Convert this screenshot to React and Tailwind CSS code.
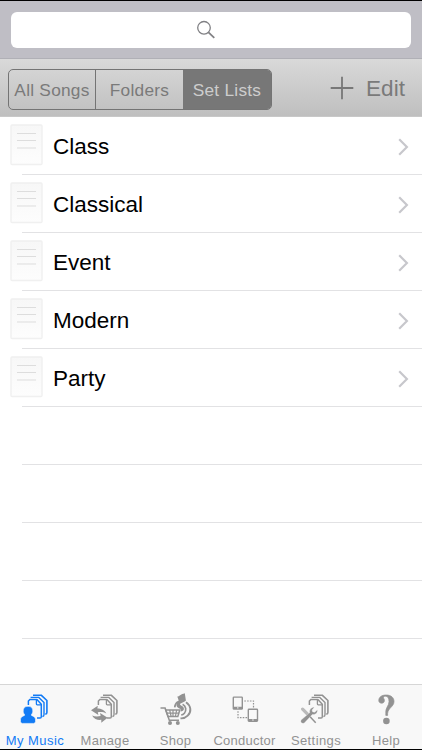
import React from 'react';

const lists = ['Class', 'Classical', 'Event', 'Modern', 'Party'];

function Pages() {
  return (
    <g fill="none" stroke="currentColor" strokeWidth="1.5">
      <path d="M11.4 15V11l1.5-1.5h7l4.4 4.8v12.4q0 1.3-1.3 1.3H20" />
      <path d="M19.4 9.8v4.2q0 .8.8.8h4" strokeWidth="1.3" />
      <path d="M13.6 7.4h8.2l5.2 5.2v12.2q0 1.5-1.6 1.7" strokeWidth="1.4" />
      <path d="M16 5.3h8.4l5.5 5.2v12q0 1.4-1.6 1.7" strokeWidth="1.6" />
    </g>
  );
}

function MusicIcon() {
  return (
    <svg className="h-9 w-9" viewBox="0 0 36 36">
      <Pages />
      <path fill="currentColor" stroke="#f8f8f8" strokeWidth=".6" d="M11 16.3c-3.3 0-5 2-4.8 4.9.1 1.8.9 2.8 1.6 3.7-.2 1.1-4.3 1.3-4.3 4.2v2.5q0 1.8 1.8 1.8h11.4q1.8 0 1.8-1.8v-2.5c0-2.9-4.1-3.1-4.3-4.2.7-.9 1.5-1.9 1.6-3.7.2-2.9-1.5-4.9-4.8-4.9z" />
    </svg>
  );
}

function ManageIcon() {
  return (
    <svg className="h-9 w-9" viewBox="0 0 36 36">
      <Pages />
      <path fill="currentColor" d="M4 20.3l6.8-4.6-.4 2.7c3.7.2 7.4 1.4 8.9 5-2.5-1.4-5.3-1.6-8.5-1.2l.6 2.9z" />
      <path fill="currentColor" d="M20.6 27.7l-6.3 5v-2.9c-3.7.4-7.3-.7-9.2-4.4 2.6 1.2 5.4 1.3 8.5.6l-.5-2.9z" />
    </svg>
  );
}

function ShopIcon() {
  return (
    <svg className="h-9 w-9" viewBox="0 0 36 36">
      <g fill="none" stroke="currentColor" strokeWidth="1.5">
        <path d="M2.5 18.1h4.6l4.2 12.1H21" />
        <path d="M7.7 20h14.1l-2 6.5H10z" />
        <path d="M8.7 23.2h12.4M11.7 20l1.4 6.5M15 20v6.5M18.6 20l-1.2 6.5" strokeWidth="1.2" />
        <path d="M16.7 17.4c.2-2.7 1.2-4.4 3.1-5.7" strokeWidth="1.6" />
        <path d="M28 12.2c5.1 3.5 5.8 9.5 1.7 13.4-2 2-4.6 3-7.2 2.7" strokeWidth="1.9" />
        <path d="M24.6 14.3c3.6 1.8 4 6.4 1.8 8.9-1 1.1-2 1.6-3.2 1.8" strokeWidth="1.7" />
      </g>
      <path fill="currentColor" d="M19.3 6.6c2.7-.5 3.5-2.5 7.5-3.4l1.1 7.2c-1.8 2.1-6.4 2.4-5.8 4.2.3 1.2 3.7 1.6 3.8 4.2.1 1.7-1.7 2.6-3.3 2.6l.3-2.2c-2-1.4-4.7-1.8-4.4-4.8.2-2.3 1.3-3.3 2.2-3.9z" />
      <circle cx="12" cy="33.1" r="2" fill="currentColor" />
      <circle cx="19.8" cy="33.1" r="2" fill="currentColor" />
    </svg>
  );
}

function ConductorIcon() {
  return (
    <svg className="h-9 w-9" viewBox="0.7 0 36 36">
      <g fill="none" stroke="currentColor">
        <rect x="7" y="7.1" width="9" height="12" rx=".7" strokeWidth="1.4" />
        <rect x="22" y="19.3" width="9.2" height="12" rx=".7" strokeWidth="1.4" />
        <path d="M6.7 17.8h9.6M21.7 30h9.8" strokeWidth="2.2" />
        <path d="M18 11h9.2v6.8M11.7 21.2v6.5h9.5" strokeWidth="1.2" strokeDasharray="1.6 1.2" />
      </g>
      <path d="M10.7 17.9h1.5M25.9 30h1.5" stroke="#f8f8f8" strokeWidth="1" />
    </svg>
  );
}

function SettingsIcon() {
  return (
    <svg className="h-9 w-9" viewBox="0 0 36 36">
      <Pages />
      <path d="M4.2 19.6l13.5 13" stroke="#f8f8f8" strokeWidth="4" />
      <path d="M4.6 19.1l5.2 5.3" stroke="currentColor" strokeWidth="3.2" strokeLinecap="round" opacity=".6" />
      <path d="M10 24.6l7.7 8.2" stroke="currentColor" strokeWidth="1.5" />
      <path fill="currentColor" stroke="#f8f8f8" strokeWidth=".3" d="M3.1 30.1l8.6-7.4c-.5-3.1 1.6-5.5 4.6-5.4l-2.3 2.8.7 1.9 2.1.2 2.5-2.5c.6 3.1-1.9 5.2-5 4.8l-8 8.4c-2.1 1.5-4.4-.9-3.2-2.8z" />
    </svg>
  );
}

function HelpIcon() {
  return (
    <svg className="h-9 w-9" viewBox="0 0 36 36">
      <path fill="currentColor" stroke="currentColor" strokeWidth=".7" d="M10.8 10.8c-.2-3.8 3.1-5.8 7.5-5.8 4.6 0 7.7 2.5 7.7 6.5 0 5.2-5.8 6.3-6.4 11.9v2h-1.8v-2c-.6-5.8 3.2-7.3 3.2-11.9 0-3.4-1.3-5.3-3.5-5.3-1.2 0-2.1.6-2.1 1.3 0 1 1 1.3 1 2.9 0 1.7-1.1 2.8-2.7 2.8-1.7 0-2.8-1-2.9-2.4z" />
      <circle cx="18.4" cy="31" r="3.3" fill="currentColor" />
    </svg>
  );
}

const tabs = [
  ['My Music', MusicIcon, 'w-[70px] tracking-[0.45px] text-[#127bf5]'],
  ['Manage', ManageIcon, 'w-[70px] tracking-[0.35px] text-[#929292]'],
  ['Shop', ShopIcon, 'w-[71px] tracking-[0.3px] text-[#929292]'],
  ['Conductor', ConductorIcon, 'w-[67px] tracking-[0.25px] text-[#929292]'],
  ['Settings', SettingsIcon, 'w-[76px] tracking-[0.4px] text-[#929292]'],
  ['Help', HelpIcon, 'w-[64px] tracking-[0.3px] text-[#929292]'],
];

function ListIcon() {
  return (
    <svg className="mb-px ml-2.5 h-[42px] w-[33px] shrink-0" viewBox="0 0 33 42">
      <defs>
        <linearGradient id="paper" x1="0" y1="0" x2="0" y2="1">
          <stop offset="0" stopColor="#f7f7f7" />
          <stop offset="1" stopColor="#fdfdfd" />
        </linearGradient>
      </defs>
      <rect x="1" y="1" width="31" height="39.5" rx="1" fill="url(#paper)" stroke="#f0f0f0" strokeWidth="1.4" />
      <path d="M7 9.5h19M7 16.5h19M7 24h19" stroke="#dddddd" strokeWidth="1" />
    </svg>
  );
}

function Row({ name }) {
  return (
    <div className="flex h-[58px] shrink-0 flex-col">
      <div className="flex flex-1 items-center">
        {name && (
          <>
            <ListIcon />
            <span className="ml-[10px] mt-[3px] flex-1 text-[22.5px] leading-7 text-black">{name}</span>
            <svg className="mr-[12px] mt-[2px] h-[18px] w-3" viewBox="0 0 12 18" fill="none" stroke="#c7c7cc" strokeWidth="2.2">
              <path d="M1.2 1.3L8.9 9l-7.7 7.7" />
            </svg>
          </>
        )}
      </div>
      <div className="ml-[22px] h-px bg-[#e2e2e4]" />
    </div>
  );
}

export default function App() {
  return (
    <div className="flex h-[750px] w-[422px] flex-col overflow-hidden bg-white font-['Liberation_Sans',Arial,sans-serif]">
      <div className="h-px shrink-0 bg-black" />
      <div className="flex h-[58px] shrink-0 items-start border-b border-[#b0b0b6] bg-[#bfbec5] px-[11px] pt-[10.5px]">
        <div className="flex h-[36.5px] w-full items-center justify-center rounded-[6px] bg-white">
          <svg className="mr-[11px] h-5 w-5" viewBox="0 0 20 20" fill="none" stroke="#808084" strokeWidth="1.3">
            <circle cx="8" cy="7.8" r="6.3" />
            <path d="M12.5 12.3l5.8 5.6" strokeWidth="1.7" />
          </svg>
        </div>
      </div>
      <div className="flex h-[58px] shrink-0 items-start border-b border-[#c8c8c8] bg-linear-to-b from-[#d9d9d9] to-[#bfbfbf] pl-2 pr-4 pt-[10px] text-[#7a7a7a]">
        <div className="flex h-[41px] w-[264px] overflow-hidden rounded-[5px] border border-[#747474] text-[17.3px] tracking-[0.25px]">
          <div className="flex w-[87px] items-center justify-center whitespace-nowrap border-r border-[#747474] pt-[3px]">All Songs</div>
          <div className="flex w-[87px] items-center justify-center pt-[3px]">Folders</div>
          <div className="flex flex-1 items-center justify-center whitespace-nowrap bg-[#777777] pt-[3px] text-[#cdcdcd]">Set Lists</div>
        </div>
        <svg className="ml-[58px] mt-[6.5px] h-6 w-6" viewBox="0 0 24 24" fill="none" stroke="#777777" strokeWidth="1.8">
          <path d="M12 .7v22.6M.7 12h22.6" />
        </svg>
        <span className="ml-[12px] mt-[7px] text-[22.5px] leading-[26px] tracking-[0.1px]">Edit</span>
      </div>
      <div className="flex flex-1 flex-col overflow-hidden">
        {lists.map((name) => <Row key={name} name={name} />)}
        {[0, 1, 2, 3, 4].map((n) => <Row key={n} />)}
      </div>
      <div className="flex h-[65px] shrink-0 border-t border-[#d6d6d6] bg-[#f8f8f8]">
        {tabs.map(([label, Icon, style]) => (
          <div key={label} className={'flex shrink-0 flex-col items-center pt-[5px] ' + style}>
            <Icon />
            <span className="mt-[7px] whitespace-nowrap text-[13px] leading-4">{label}</span>
          </div>
        ))}
      </div>
      <div className="h-px shrink-0 bg-black" />
    </div>
  );
}
